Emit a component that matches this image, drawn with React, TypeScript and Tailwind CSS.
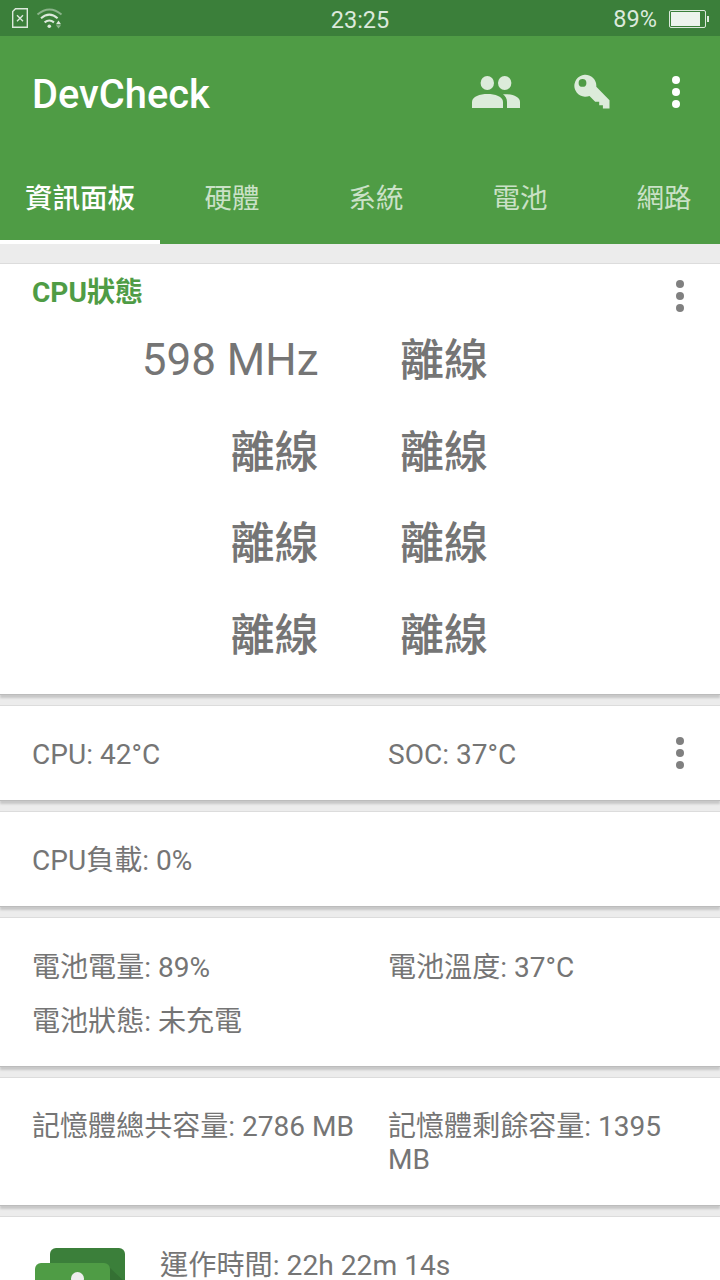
import type { ReactNode } from "react";
import clsx from "clsx";

const TABS = ["資訊面板", "硬體", "系統", "電池", "網路"];

const CORES = ["598 MHz", "離線", "離線", "離線", "離線", "離線", "離線", "離線"];

function Dots({ className }: { className?: string }) {
  return (
    <button className={clsx("flex flex-col gap-1", className)} aria-label="menu">
      <span className="size-2 rounded-full bg-current" />
      <span className="size-2 rounded-full bg-current" />
      <span className="size-2 rounded-full bg-current" />
    </button>
  );
}

function StatusBar() {
  return (
    <div className="grid h-9 grid-cols-3 items-center bg-[#3b7f3a] text-[23.5px] leading-9 text-[#dce9dc]">
      <div className="flex h-full">
        <svg width="70" height="36" viewBox="0 0 70 36" fill="none" stroke="currentColor">
          <path d="M15.5 8.7H27.3V27.3H12.7V11.5Z" strokeWidth="1.4" />
          <path d="M17 15.3L23 21.3M23 15.3L17 21.3" strokeWidth="1.4" />
          <path d="M37.5 14.5Q49.5 4.5 61.5 14.5" strokeWidth="2" opacity="0.5" />
          <path d="M41 18.3Q49.3 11 57.6 18.3" strokeWidth="2" />
          <path d="M44.6 22.4Q49.3 18.6 54 22.4" strokeWidth="2" />
          <circle cx="49.3" cy="26.2" r="1.8" fill="currentColor" stroke="none" />
          <path d="M56 24.2L58.5 20.6L61 24.2Z" fill="currentColor" stroke="none" />
          <path d="M56 25.2L58.5 28.4L61 25.2Z" fill="currentColor" stroke="none" opacity="0.5" />
        </svg>
      </div>
      <span className="pt-[2px] text-center">23:25</span>
      <div className="flex h-9 items-center justify-end gap-3 pr-[11px]">
        <span>89%</span>
        <svg width="40" height="18" viewBox="0 0 40 18" fill="none">
          <rect x="0.5" y="0.5" width="36" height="17" rx="1.5" stroke="#dce9dc" />
          <rect x="2" y="2" width="29" height="14" fill="#edf4ed" />
          <rect x="38" y="6" width="2" height="6" fill="#dce9dc" />
        </svg>
      </div>
    </div>
  );
}

function PeopleIcon() {
  return (
    <svg width="48" height="32" viewBox="0 0 48 32" fill="currentColor">
      <ellipse cx="15.3" cy="7" rx="6.7" ry="7" />
      <ellipse cx="32.7" cy="7" rx="6.7" ry="7" />
      <path d="M0 32V26C0 20.5 8 18 15.5 18S31 20.5 31 26V32Z" />
      <path d="M35 32V26C35 22.5 33.3 20 31 18.2C39.5 17.8 48 20.5 48 26V32Z" />
    </svg>
  );
}

function KeyIcon() {
  return (
    <svg width="36" height="36" viewBox="0 0 36 36" fill="currentColor">
      <path
        fillRule="evenodd"
        d="M22.3 12.7L35.5 26.2V34.5H28.9V31.3H25.2V27.8H21.2L15.5 22A11 11 0 1 1 22.3 12.7ZM8.5 5A3.9 3.9 0 1 0 8.5 12.8A3.9 3.9 0 1 0 8.5 5Z"
      />
    </svg>
  );
}

function Header() {
  return (
    <header className="bg-[#4f9c45] text-white">
      <div className="flex h-28 items-center pr-10 pl-8">
        <h1 className="flex-1 pt-[6px] text-[39.8px] leading-none font-medium">DevCheck</h1>
        <span className="text-[#dcebda]">
          <PeopleIcon />
        </span>
        <span className="ml-[54px] text-[#dcebda]">
          <KeyIcon />
        </span>
        <Dots className="ml-[62px]" />
      </div>
      <nav className="flex h-24 text-[27.5px]">
        {TABS.map((tab, i) => (
          <button
            key={tab}
            className={clsx(
              "flex shrink-0 items-center justify-center border-b-4 pt-[9px]",
              i === 0 ? "w-40 border-white font-medium text-white" : "w-36 border-transparent text-[#cae1c7]",
            )}
          >
            {tab}
          </button>
        ))}
      </nav>
    </header>
  );
}

function Card({ className, children }: { className?: string; children: ReactNode }) {
  return (
    <section
      className={clsx(
        "shrink-0 bg-white shadow-[0_-1px_0_#dcdcdc,0_1px_0_#bcbcbc,0_4px_2px_#c8c8c8]",
        className,
      )}
    >
      {children}
    </section>
  );
}

function DeviceIcon() {
  return (
    <svg width="92" height="92" viewBox="0 0 92 92">
      <rect x="16" y="0" width="75" height="75" rx="6" fill="#3b7f3a" />
      <path d="M75 19L91 34V70L60 75Z" fill="#347033" />
      <rect x="1" y="15" width="75" height="75" rx="6" fill="#4f9c45" />
      <circle cx="43.5" cy="30.5" r="6.5" fill="#eeeeee" />
      <path d="M37.5 42H49.5V75H37.5Z" fill="#eeeeee" />
    </svg>
  );
}

export default function App() {
  return (
    <div className="flex h-screen w-full flex-col overflow-hidden bg-[#ececec] font-['Roboto','Noto_Sans_CJK_TC',sans-serif] text-[#757575]">
      <StatusBar />
      <Header />
      <main className="flex flex-col gap-3 pt-5 text-[28.05px] leading-[33px]">
        <Card className="h-[430px]">
          <div className="flex items-start justify-between pt-3 pr-9 pl-8">
            <h2 className="font-bold text-[#4f9c45]">CPU狀態</h2>
            <Dots className="mt-1 text-[#808080]" />
          </div>
          <div className="mt-[3px] grid auto-rows-[91.7px] grid-cols-[318.5px_1fr] gap-x-[81.5px] text-[44px] leading-[92px]">
            {CORES.map((core, i) => (
              <span
                key={i}
                className={clsx(
                  i % 2 === 0 && "text-right",
                  core === "離線" ? "font-medium" : "leading-[90px]",
                )}
              >
                {core}
              </span>
            ))}
          </div>
        </Card>

        <Card className="flex h-[94px] items-center pt-[2px] pr-9 pl-8">
          <span className="w-[356px]">CPU: 42°C</span>
          <span className="flex-1">SOC: 37°C</span>
          <Dots className="-mt-[2px] text-[#808080]" />
        </Card>

        <Card className="flex h-[94px] items-center px-8 pt-[2px]">CPU負載: 0%</Card>

        <Card className="grid h-[148px] grid-cols-[356px_1fr] content-start gap-y-[21px] pt-[33px] pl-8">
          <span>電池電量: 89%</span>
          <span>電池溫度: 37°C</span>
          <span>電池狀態: 未充電</span>
        </Card>

        <Card className="grid h-[127px] grid-cols-[356px_300px] content-start pt-8 pl-8">
          <span>記憶體總共容量: 2786 MB</span>
          <span>記憶體剩餘容量: 1395 MB</span>
        </Card>

        <Card className="flex h-[63px] items-start gap-[34px] overflow-hidden pt-[31px] pl-[34px]">
          <DeviceIcon />
          <span className="pt-[3px] text-[28.2px] leading-[29px]">運作時間: 22h 22m 14s</span>
        </Card>
      </main>
    </div>
  );
}
